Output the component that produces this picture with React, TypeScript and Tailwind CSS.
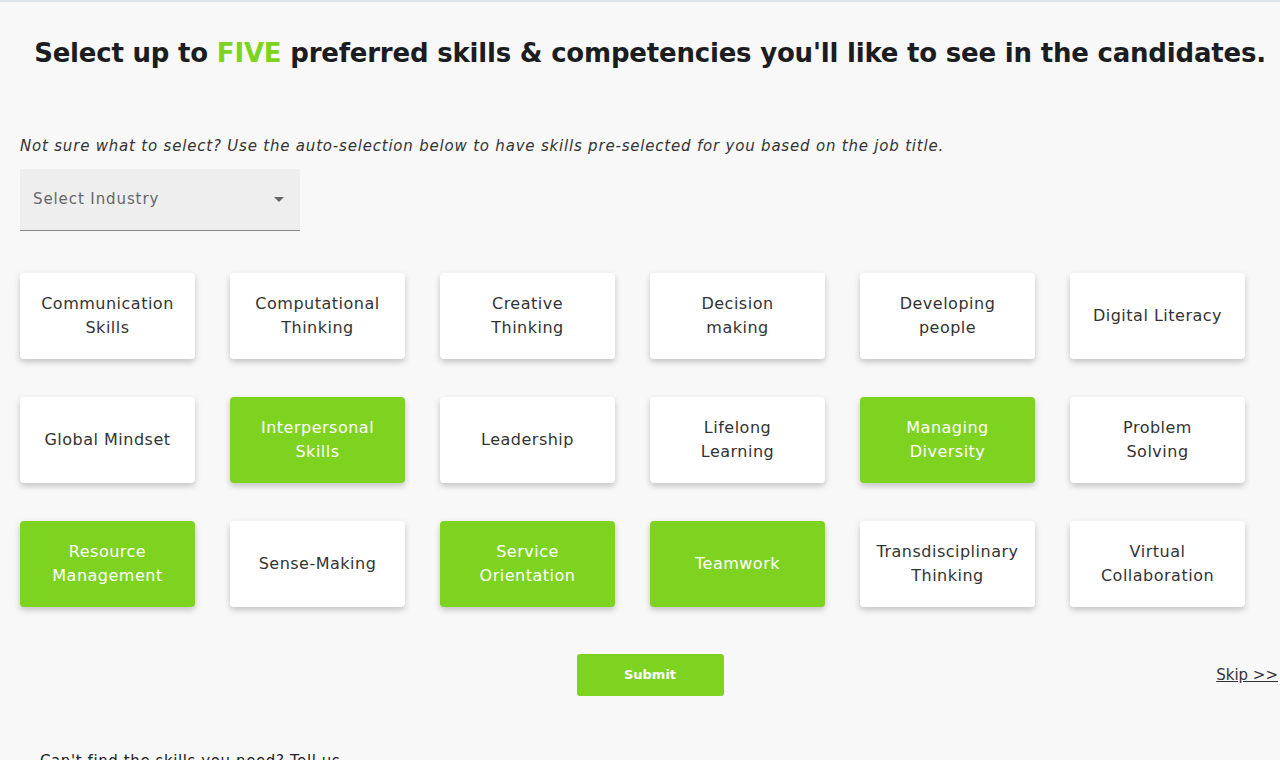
import React, { useState } from 'react';

// lines are split the way the cards wrap in the design
const skills: string[][] = [
  ['Communication', 'Skills'],
  ['Computational', 'Thinking'],
  ['Creative', 'Thinking'],
  ['Decision', 'making'],
  ['Developing', 'people'],
  ['Digital Literacy'],
  ['Global Mindset'],
  ['Interpersonal', 'Skills'],
  ['Leadership'],
  ['Lifelong', 'Learning'],
  ['Managing', 'Diversity'],
  ['Problem', 'Solving'],
  ['Resource', 'Management'],
  ['Sense-Making'],
  ['Service', 'Orientation'],
  ['Teamwork'],
  ['Transdisciplinary', 'Thinking'],
  ['Virtual', 'Collaboration'],
];

const initial = ['Interpersonal Skills', 'Managing Diversity', 'Resource Management', 'Service Orientation', 'Teamwork'];

export default function App() {
  const [selected, setSelected] = useState<string[]>(initial);

  const toggle = (s: string) => {
    if (selected.includes(s)) {
      setSelected(selected.filter((x) => x !== s));
    } else if (selected.length < 5) {
      setSelected([...selected, s]);
    }
  };

  return (
    <div className="min-h-[760px] bg-[#f8f8f9] border-t-2 border-[#dfe3ea] font-['DejaVu_Sans',sans-serif] overflow-hidden">
      <div className="pl-[20px] w-[1280px]">
        <h1 className="pt-[31px] text-center text-[26px] leading-[40px] font-bold text-[#1c1d21] tracking-[-0.2px] whitespace-nowrap">
          Select up to <span className="text-[#7ed321]">FIVE</span> preferred skills &amp; competencies you'll like to see in the candidates.
        </h1>

        <p className="mt-[61px] text-[15px] leading-[24px] italic text-[#333] tracking-[0.8px]">
          Not sure what to select? Use the auto-selection below to have skills pre-selected for you based on the job title.
        </p>

        <div className="mt-[11px] w-[280px] h-[62px] bg-[#eeeeee] border-b border-[#8a8a8a] flex items-center justify-between pl-[13px] pr-[16px]">
          <span className="text-[15px] text-[#666] tracking-[0.9px]">Select Industry</span>
          <svg width="10" height="5" viewBox="0 0 10 5"><path d="M0 0h10L5 5z" fill="#666" /></svg>
        </div>

        <div className="mt-[42px] grid grid-cols-[repeat(6,175px)] gap-x-[35px] gap-y-[38px]">
          {skills.map((lines) => {
            const name = lines.join(' ');
            const on = selected.includes(name);
            return (
              <button
                key={name}
                onClick={() => toggle(name)}
                className={
                  'h-[86px] rounded-[4px] px-2 text-[16px] leading-[24px] tracking-[0.5px] flex flex-col items-center justify-center text-center whitespace-nowrap shadow-[0_3px_6px_rgba(0,0,0,0.22)] ' +
                  (on ? 'bg-[#7ed321] text-white' : 'bg-white text-[#333]')
                }
              >
                {lines.map((l) => (
                  <span key={l}>{l}</span>
                ))}
              </button>
            );
          })}
        </div>

        <div className="relative mt-[47px] flex justify-center">
          <button className="w-[147px] h-[42px] rounded-[3px] bg-[#7ed321] text-white text-[13px] font-bold">Submit</button>
          <a href="#" className="absolute right-[2px] top-[10px] text-[15px] text-[#333] underline">Skip &gt;&gt;</a>
        </div>

        <p className="mt-[54px] pl-[20px] text-[15px] text-[#222] tracking-[0.6px]">Can't find the skills you need? Tell us</p>
      </div>
    </div>
  );
}
